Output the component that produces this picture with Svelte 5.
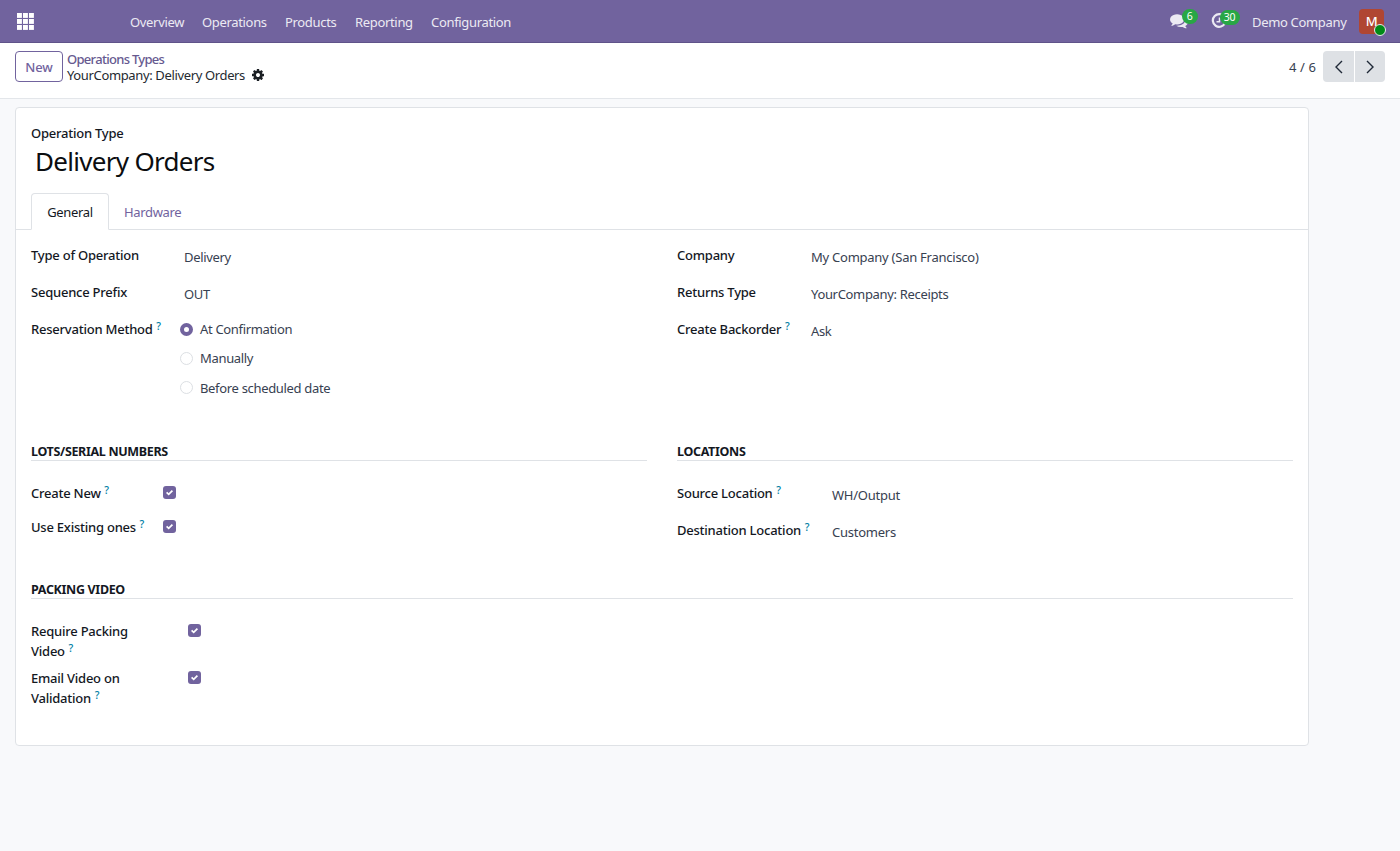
<script>
  const menu = [
    { text: 'Overview', w: 54 },
    { text: 'Operations', w: 65 },
    { text: 'Products', w: 52 },
    { text: 'Reporting', w: 58 },
    { text: 'Configuration', w: 81 }
  ];
  const reservation = ['At Confirmation', 'Manually', 'Before scheduled date'];
  let method = $state('At Confirmation');
  let tab = $state('General');
</script>

{#snippet help()}<sup>?</sup>{/snippet}

{#snippet check()}
  <span class="check" role="checkbox" aria-checked="true" tabindex="0">
    <svg viewBox="0 0 13 13" width="13" height="13"><path d="M3.600 6.400 5.700 8.400 9.400 4.600" fill="none" stroke="#fff" stroke-width="1.7" /></svg>
  </span>
{/snippet}

{#snippet field(label, value, tip)}
  <div class="field">
    <div class="label">{label}{#if tip}{' '}{@render help()}{/if}</div>
    <div class="value">{value}</div>
  </div>
{/snippet}

{#snippet toggle(label)}
  <div class="field">
    <div class="label"><span>{label} {@render help()}</span></div>
    {@render check()}
  </div>
{/snippet}

<header>
  <svg class="apps" width="17" height="17" viewBox="0 0 17 17" fill="#fff">
    {#each [0, 6, 12] as y}
      {#each [0, 6, 12] as x}
        <rect {x} {y} width="4.9" height="4.9" />
      {/each}
    {/each}
  </svg>
  <nav>
    {#each menu as item}
      <span style:width="{item.w}px">{item.text}</span>
    {/each}
  </nav>
  <div class="systray">
    <div class="tray chat">
      <svg width="18" height="16" viewBox="0 0 1792 1600"><path fill="#eceaf3" d="M1408 640q0 139-94 257t-256.500 186.500-353.500 68.500q-86 0-176-16-124 88-278 128-36 9-86 16h-3q-11 0-20.500-8t-11.500-21q-1-3-1-6.500t.5-6.500 2-6l2.500-5 3.500-5.500 4-5 4.500-5 4-4.500q5-6 23-25t26-29.500 22.500-29 25-38.500 20.500-44q-124-72-195-177t-71-224q0-139 94-257t256.500-186.500 353.500-68.500 353.500 68.500 256.500 186.500 94 257zm384 256q0 120-71 224.500t-195 176.500q10 24 20.500 44t25 38.500 22.500 29 26 29.500 23 25q1 1 4 4.500t4.500 5 4 5 3.500 5.500l2.500 5 2 6 .5 6.500-1 6.500q-3 14-13 22t-22 7q-50-7-86-16-154-40-278-128-90 16-176 16-271 0-472-132 58 4 88 4 161 0 309-45t264-129q125-92 192-212t67-254q0-77-23-152 129 71 204 178t75 230z" /></svg>
      <span class="badge">6</span>
    </div>
    <div class="tray clock">
      <svg width="16" height="16" viewBox="0 0 16 16" fill="none" stroke="#eceaf3"><path d="M13.400 4A6.300 6.300 0 1 0 14 9.800" stroke-width="2.200" /><path d="M8.500 4.500V8.700H5.500" stroke-width="1.500" /></svg>
      <span class="badge wide">30</span>
    </div>
    <span class="company">Demo Company</span>
    <div class="avatar">M<i></i></div>
  </div>
</header>

<div class="panel">
  <button class="new">New</button>
  <div class="crumbs">
    <a href="#types">Operations Types</a>
    <div class="current">
      <span>YourCompany: Delivery Orders</span>
      <svg width="12" height="12" viewBox="0 128 1536 1536"><path fill="#1b1f24" d="M1024 896q0-106-75-181t-181-75-181 75-75 181 75 181 181 75 181-75 75-181zm512-109v222q0 12-8 23t-20 13l-185 28q-19 54-39 91 35 50 107 138 10 12 10 25t-9 23q-27 37-99 108t-94 71q-12 0-26-9l-138-108q-44 23-91 38-16 136-29 186-7 28-36 28h-222q-14 0-24.500-8.500t-11.500-21.500l-28-184q-49-16-90-37l-141 107q-10 9-25 9-14 0-25-11-126-114-165-168-7-10-7-23 0-12 8-23 15-21 51-66.500t54-70.500q-27-50-41-99l-183-27q-13-2-21-12.500t-8-23.500v-222q0-12 8-23t19-13l186-28q14-46 39-92-40-57-107-138-10-12-10-24 0-10 9-23 26-36 98.500-107.500t94.500-71.500q13 0 26 10l138 107q44-23 91-38 16-136 29-186 7-28 36-28h222q14 0 24.500 8.500t11.500 21.500l28 184q49 16 90 37l142-107q9-9 24-9 13 0 25 10 129 119 165 170 7 8 7 22 0 12-8 23-15 21-51 66.500t-54 70.500q26 50 41 98l183 28q13 2 21 12.500t8 23.500z" /></svg>
    </div>
  </div>
  <span class="count">4 / 6</span>
  <div class="pager">
    <button aria-label="Previous"><svg width="10" height="14" viewBox="0 0 10 14"><path d="M8 1 2 7l6 6" /></svg></button>
    <button aria-label="Next"><svg width="10" height="14" viewBox="0 0 10 14"><path d="M2 1l6 6-6 6" /></svg></button>
  </div>
</div>

<main>
  <div class="sheet">
    <div class="title-label">Operation Type</div>
    <h1>Delivery Orders</h1>
    <div class="tabs">
      {#each ['General', 'Hardware'] as name}
        <button class:active={tab === name} onclick={() => (tab = name)}>{name}</button>
      {/each}
    </div>

    <div class="columns top">
      <div class="group general">
        {@render field('Type of Operation', 'Delivery')}
        {@render field('Sequence Prefix', 'OUT')}
        <div class="field">
          <div class="label">Reservation Method {@render help()}</div>
          <div class="radios">
            {#each reservation as option}
              <label>
                <input type="radio" name="reservation" value={option} bind:group={method} />
                {option}
              </label>
            {/each}
          </div>
        </div>
      </div>
      <div class="group company-group">
        {@render field('Company', 'My Company (San Francisco)')}
        {@render field('Returns Type', 'YourCompany: Receipts')}
        {@render field('Create Backorder', 'Ask', true)}
      </div>
    </div>

    <div class="columns middle">
      <div class="group lots">
        <h2>Lots/Serial Numbers</h2>
        {@render toggle('Create New')}
        {@render toggle('Use Existing ones')}
      </div>
      <div class="group locations">
        <h2>Locations</h2>
        {@render field('Source Location', 'WH/Output', true)}
        {@render field('Destination Location', 'Customers', true)}
      </div>
    </div>

    <div class="group packing">
      <h2>Packing Video</h2>
      {@render toggle('Require Packing Video')}
      {@render toggle('Email Video on Validation')}
    </div>
  </div>
</main>

<style>
  :global(body) {
    margin: 0;
    background: #f8f9fb;
    color: #374151;
    font-family: 'Noto Sans', 'Open Sans', sans-serif;
    font-size: 13px;
    line-height: 20px;
    letter-spacing: -0.33px;
  }
  :global(html) { overflow: hidden; }
  button { font: inherit; letter-spacing: inherit; margin: 0; padding: 0; border: 0; background: none; }
  svg { display: block; flex: none; }

  header {
    box-sizing: border-box;
    height: 43px;
    padding: 0 16px 0 17px;
    display: flex;
    align-items: center;
    background: #71639e;
    border-bottom: 1px solid #5f5389;
    color: #eceaf3;
    white-space: nowrap;
  }
  .apps { margin-top: 1px; }
  nav { display: flex; gap: 18px; margin-left: 96px; padding-top: 1px; }
  .systray { margin-left: auto; display: flex; align-items: center; height: 100%; }
  .tray { position: relative; }
  .chat { width: 41px; margin-top: -1px; }
  .clock { width: 41.500px; margin-top: -1px; }
  .badge {
    position: absolute;
    left: 12px;
    top: -4px;
    width: 16px;
    height: 15px;
    border-radius: 8px;
    background: #28a745;
    color: #fff;
    font-size: 10.500px;
    line-height: 15px;
    text-align: center;
  }
  .badge.wide { left: 9px; top: -3px; width: 20px; }
  .company { width: 95px; margin-right: 12px; padding-top: 1px; }
  .avatar {
    position: relative;
    width: 25px;
    height: 25px;
    border-radius: 4px;
    background: #b04632;
    color: #fff;
    text-align: center;
    line-height: 25px;
    margin: 1px 0 0 0;
    font-weight: 500;
  }
  .avatar i {
    position: absolute;
    right: -2px;
    bottom: -2px;
    width: 10px;
    height: 10px;
    border: 1px solid #e9e6f0;
    border-radius: 50%;
    background: #008a17;
  }

  .panel {
    box-sizing: border-box;
    height: 56px;
    padding: 8px 15px 0;
    display: flex;
    align-items: flex-start;
    background: #fff;
    border-bottom: 1px solid #e3e6ea;
  }
  .new {
    box-sizing: border-box;
    width: 48px;
    height: 31px;
    border: 1px solid #71639e;
    border-radius: 4px;
    color: #71639e;
    font-weight: 500;
    letter-spacing: -0.1px;
  }
  .crumbs { margin-left: 4px; line-height: 16px; white-space: nowrap; }
  .crumbs a { display: block; color: #66598f; text-decoration: none; letter-spacing: -0.62px; font-weight: 500; }
  .crumbs a { letter-spacing: -0.7px; }
  .current { display: flex; align-items: center; color: #252a31; gap: 7px; }
  .current span { width: 178px; letter-spacing: -0.36px; }
  .count { margin: 6px 7px 0 auto; letter-spacing: 0.1px; }
  .pager { display: flex; gap: 1px; }
  .pager button { width: 31px; height: 31px; background: #dee1e5; display: grid; place-items: center; border-radius: 4px 0 0 4px; }
  .pager button:last-child { width: 30px; border-radius: 0 4px 4px 0; }
  .pager path { fill: none; stroke: #1f2937; stroke-width: 1.400; }

  main { padding: 8px 0 0 15px; }
  .sheet {
    box-sizing: border-box;
    width: 1294px;
    height: 639px;
    padding: 15px 15px;
    background: #fff;
    border: 1px solid #dfe2e6;
    border-radius: 4px;
  }
  .title-label, .label { color: #14181f; font-weight: 500; letter-spacing: -0.23px; }
  h1 { margin: 0; padding: 0 4px; color: #0b0d10; font-size: 26px; line-height: 37px; font-weight: 400; letter-spacing: -0.7px; }
  .tabs { display: flex; margin: 13px -15px 0; padding-left: 15px; border-bottom: 1px solid #dfe2e6; height: 36px; }
  .tabs button { box-sizing: border-box; height: 37px; padding: 1px 14px 0; color: #71639e; border: 1px solid transparent; }
  .tabs .active { width: 78px; background: #fff; color: #14181f; border-color: #dfe2e6; border-bottom-color: #fff; border-radius: 4px 4px 0 0; padding: 1px 0 0; }

  .columns { display: grid; grid-template-columns: 616px 616px; gap: 30px; }
  .top { height: 197px; padding-top: 15px; }
  .middle { height: 138px; }
  .field { display: grid; grid-template-columns: var(--label) 1fr; min-height: 37px; white-space: nowrap; }
  .general { --label: 149px; }
  .company-group { --label: 130px; }
  .lots { --label: 131.500px; }
  .locations { --label: 151px; }
  .packing { --label: 157px; }
  .value { padding: 2px 4px 0; }
  .company-group .field:first-child .value { letter-spacing: -0.25px; }
  .locations .value { letter-spacing: -0.25px; }
  sup { font-size: 10.500px; line-height: 0; color: #0180a5; vertical-align: 4px; font-weight: 500; margin-left: 0.500px; }
  .lots .field { min-height: 34px; }
  .packing .field { min-height: 47px; }
  .packing .label { width: 115px; white-space: normal; }

  .radios label { display: flex; align-items: center; gap: 7px; height: 20px; margin-bottom: 9.300px; }
  input {
    appearance: none;
    box-sizing: border-box;
    width: 13px;
    height: 13px;
    margin: 0;
    border: 1px solid #dcdfe3;
    border-radius: 50%;
    background: #fff;
  }
  input:checked { border: 4px solid #71639e; }

  h2 {
    box-sizing: border-box;
    height: 19px;
    margin: 0 0 22px;
    color: #14181f;
    font-size: 12.500px;
    line-height: 20px;
    font-weight: 700;
    text-transform: uppercase;
    border-bottom: 1px solid #dfe2e6;
  }
  .check { width: 13px; height: 13px; margin-top: 3px; border-radius: 3px; background: #71639e; display: grid; place-items: center; }
</style>
